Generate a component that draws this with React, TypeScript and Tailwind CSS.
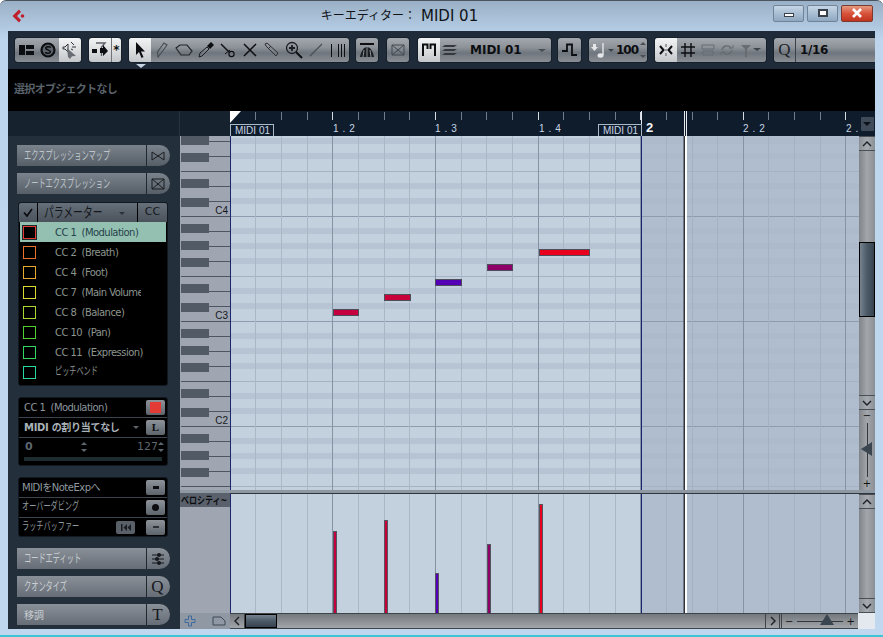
import type { ReactNode } from 'react';

const FONT = "font-['DejaVu_Sans','Noto_Sans_CJK_JP',sans-serif]";
const BASE =
  'flex h-[24px] shrink-0 overflow-hidden rounded-[3px] bg-[linear-gradient(#a3a8ae,#8d9298_40%,#6f757d_62%,#898e94)] shadow-[0_0_0_1px_#16202b]';
const GROUP = `${BASE} items-stretch`;
const CENTER = `${BASE} items-center justify-center`;
const LIT = 'bg-[linear-gradient(#f2f3f4,#dcdee0_50%,#c4c7ca)]';

const CC_ROWS = [
  { label: 'CC 1  (Modulation)', color: 'border-[#e23a34]' },
  { label: 'CC 2  (Breath)', color: 'border-[#e8702a]' },
  { label: 'CC 4  (Foot)', color: 'border-[#e8a82a]' },
  { label: 'CC 7  (Main Volume', color: 'border-[#d8d830]' },
  { label: 'CC 8  (Balance)', color: 'border-[#a8d830]' },
  { label: 'CC 10  (Pan)', color: 'border-[#50d030]' },
  { label: 'CC 11  (Expression)', color: 'border-[#30d860]' },
];

const NOTES = [
  { x: 333, y: 309, w: 26, vel: 531, fill: '#c4003e' },
  { x: 384, y: 294, w: 27, vel: 520, fill: '#c8003a' },
  { x: 435, y: 279, w: 27, vel: 573, fill: '#5400b4' },
  { x: 487, y: 264, w: 26, vel: 544, fill: '#8e0068' },
  { x: 539, y: 249, w: 51, vel: 504, fill: '#e8001c' },
];

const OCTAVES = [111, 216, 321, 426];
const TICKS = Array.from({ length: 25 }, (_, i) => ({
  x: Math.floor(230.3 + i * 25.65) + 0.5,
  beat: i % 4 === 0,
}));

function Ico({ children, w = 16, h = 16 }: { children: ReactNode; w?: number; h?: number }) {
  return (
    <svg width={w} height={h} viewBox={`0 0 ${w} ${h}`} fill="none" className="shrink-0">
      {children}
    </svg>
  );
}

function Cell({ children, lit, w = 22 }: { children: ReactNode; lit?: boolean; w?: number }) {
  return (
    <div
      style={{ width: w }}
      className={`flex shrink-0 items-center justify-center ${lit ? LIT : ''}`}
    >
      {children}
    </div>
  );
}

function Chevron({ up }: { up?: boolean }) {
  return (
    <svg width="10" height="6" viewBox="0 0 10 6" fill="none">
      <path d={up ? 'M1 5 5 1l4 4' : 'M1 1l4 4 4-4'} stroke="#1c1f24" strokeWidth="1.4" />
    </svg>
  );
}

function ScrollBtn({ up }: { up?: boolean }) {
  return (
    <div className="flex h-[15px] shrink-0 items-center justify-center border-y border-[#4a4f55] bg-[linear-gradient(90deg,#8b9097,#a6abb0,#8b9097)]">
      <Chevron up={up} />
    </div>
  );
}

// kana in the reference is set much narrower than Noto's full width glyphs
function Narrow({ children }: { children: ReactNode }) {
  return <span className="inline-block origin-left scale-x-[0.65] text-[11px] whitespace-nowrap">{children}</span>;
}

function SideButton({ label, icon, dim, wide }: { label: string; icon: ReactNode; dim?: boolean; wide?: boolean }) {
  return (
    <div
      className={`flex h-[21px] w-[153px] overflow-hidden rounded-l-[4px] rounded-r-full ${
        dim
          ? 'bg-[linear-gradient(#7a828b,#565e67)] text-[#bcc3c9]'
          : 'bg-[linear-gradient(#8a9098,#666d76)] text-[#c8cdd2]'
      }`}
    >
      <div className="flex w-[129px] shrink-0 items-center pt-[1px] pl-[7px] whitespace-nowrap">
        {wide ? (
          <span className="text-[10px]">{label}</span>
        ) : (
          <span className="inline-block origin-left scale-x-[0.6] text-[12px]">{label}</span>
        )}
      </div>
      <div className="flex w-[24px] items-center justify-center border-l border-[#20282f] pr-[2px] text-[#15181c]">
        {icon}
      </div>
    </div>
  );
}

function PanelBtn({ children }: { children?: ReactNode }) {
  return (
    <div className="flex h-[15px] w-[19px] shrink-0 items-center justify-center rounded-[2px] bg-[linear-gradient(#8d9399,#5d646c)]">
      {children}
    </div>
  );
}

function TitleBar() {
  return (
    <div className="relative flex h-[30px] shrink-0 items-center pl-[12px]">
      <svg width="14" height="14" viewBox="0 0 14 14">
        <path d="M7 0.5 0.5 7 7 13.5 9 11 5 7l4-4z" fill="#c0202c" />
        <circle cx="10.5" cy="7" r="1.8" fill="#c0202c" />
      </svg>
      <div className="flex flex-1 items-center justify-center gap-[5px] text-[#101418]">
        <span className="text-[12px] leading-[20px]">キーエディター：</span>
        <span className="text-[15px] leading-[20px]">MIDI 01</span>
      </div>
      <div className="mr-[10px] mb-[6px] flex h-[17px] gap-[3px]">
        <div className="flex w-[31px] items-center justify-center rounded-[2px] border border-[#6f8499] bg-[linear-gradient(#c6d6e6,#a9bed3_50%,#8fa8c0)]">
          <div className="mt-[3px] h-[4px] w-[10px] border border-[#39424c] bg-white" />
        </div>
        <div className="flex w-[31px] items-center justify-center rounded-[2px] border border-[#6f8499] bg-[linear-gradient(#c6d6e6,#a9bed3_50%,#8fa8c0)]">
          <div className="h-[8px] w-[10px] border-2 border-[#39424c] bg-white" />
        </div>
        <div className="flex w-[32px] items-center justify-center rounded-[2px] border border-[#7a3a30] bg-[linear-gradient(#e49a80,#d8533a_50%,#c03420)]">
          <svg width="12" height="10" viewBox="0 0 12 10">
            <path d="M2 1l8 8M10 1 2 9" stroke="#fff" strokeWidth="2.6" />
          </svg>
        </div>
      </div>
    </div>
  );
}

function Toolbar() {
  return (
    <div className={`flex h-[38px] shrink-0 items-center overflow-hidden bg-[#1f2b38] pl-[7px] ${FONT}`}>
      <div className={`${GROUP} w-[66px]`}>
        <Cell>
          <Ico w={15} h={10}>
            <path d="M0 0h6v10H0zM7 0h8v4H7zM7 6h8v4H7z" fill="#0c0e11" />
          </Ico>
        </Cell>
        <Cell>
          <Ico>
            <circle cx="8" cy="8" r="6.5" stroke="#0c0e11" strokeWidth="2.2" fill="#5c626a" />
            <path d="M10.8 5.6C9.5 4 5.6 4.6 5.8 6.4 6 8 10.4 7.8 10.4 9.8 10.3 11.4 6.5 11.8 5.2 10.2" stroke="#0c0e11" strokeWidth="1.5" />
          </Ico>
        </Cell>
        <Cell lit>
          <Ico w={16} h={18}>
            <path d="M1 6h2l3-3v8L3 8H1z M9 1 12 4M10 6h4M9 8l2 1" stroke="#30343a" />
            <path d="M5 7l9 8-4 .3L8 18l-2-2z" fill="#6a6e74" />
          </Ico>
        </Cell>
      </div>
      <div className={`${GROUP} ml-[8px] w-[32px] ${LIT}`}>
        <Cell>
          <Ico w={17} h={16}>
            <path d="M4 1h9L9.5 5v9" stroke="#5d6269" strokeWidth="1.4" />
            <path d="M0 7h5v4H0zM8 6h3V3l5 6-5 5v-3H8z" fill="#0c0e11" />
          </Ico>
        </Cell>
        <div className="flex w-[10px] items-center justify-center border-l border-[#707479] text-[12px] font-bold text-[#111]">*</div>
      </div>
      <div className="relative ml-[8px] shrink-0">
        <div className={`${GROUP} w-[220px]`}>
          <Cell lit>
            <Ico>
              <path d="M4 0v13l3-3 2.5 6 2-1-2.5-5.500H13z" fill="#0c0e11" />
            </Ico>
          </Cell>
          <Cell>
            <Ico>
              <path d="M4 15 3.500 10 10 1l3 2L6.500 12z" stroke="#4a4f56" strokeWidth="1.2" />
            </Ico>
          </Cell>
          <Cell>
            <Ico w={18} h={12}>
              <path d="M1 4 5 1h7l5 6-3 4H6z" stroke="#23272c" strokeWidth="1.2" />
            </Ico>
          </Cell>
          <Cell>
            <Ico>
              <path d="M1 15l1-4 7-6 2 2-7 7z" stroke="#1a1d21" />
              <path d="M9 4l4-4 3 3-4 4z" fill="#0c0e11" />
            </Ico>
          </Cell>
          <Cell>
            <Ico>
              <path d="M1 2l8 8" stroke="#0c0e11" strokeWidth="1.5" />
              <path d="M5 12l5-4" stroke="#0c0e11" />
              <circle cx="11.500" cy="12" r="2.600" stroke="#0c0e11" strokeWidth="1.200" />
            </Ico>
          </Cell>
          <Cell>
            <Ico w={14} h={14}>
              <path d="M1 1l12 12M13 1 1 13" stroke="#0c0e11" strokeWidth="1.5" />
            </Ico>
          </Cell>
          <Cell>
            <Ico>
              <path d="M1 2l2-1 11 10-2 3L2 4z" stroke="#2c3036" />
              <path d="M4 7l3-3" stroke="#2c3036" />
            </Ico>
          </Cell>
          <Cell>
            <Ico w={18} h={18}>
              <circle cx="7" cy="7" r="5.500" stroke="#1a1d21" strokeWidth="1.300" />
              <path d="M7 4v6M4 7h6" stroke="#1a1d21" strokeWidth="1.800" />
              <path d="M11 11l6 6" stroke="#0c0e11" strokeWidth="2" />
            </Ico>
          </Cell>
          <Cell>
            <Ico w={14} h={14}>
              <path d="M1 13 13 1" stroke="#4a4f56" strokeWidth="1.200" />
            </Ico>
          </Cell>
          <Cell>
            <Ico w={17} h={13}>
              <path d="M1.500 0v13M8.500 0v13M11.500 0v13M14.500 0v13" stroke="#0c0e11" />
            </Ico>
          </Cell>
        </div>
        <div className="absolute top-[26px] left-[7px] h-0 w-0 border-x-[5px] border-t-[4px] border-x-transparent border-t-[#c8d4e0]" />
      </div>
      <div className={`${CENTER} ml-[7px] w-[22px]`}>
        <Ico w={16} h={16}>
          <path d="M1 1h14v2H1z" fill="#0c0e11" />
          <path d="M1 15C2 9 5 5 8 5s6 4 7 10z" fill="#1a1d21" />
          <path d="M4 15l1-7M8 15V5M12 15l-1-7" stroke="#8b9096" />
        </Ico>
      </div>
      <div className={`${CENTER} ml-[9px] w-[22px]`}>
        <Ico w={14} h={14}>
          <path d="M1 2h12v10H1zM1 2l12 10M13 2 1 12" stroke="#434850" />
        </Ico>
      </div>
      <div className={`${GROUP} ml-[9px] w-[133px] text-[12px] font-bold text-[#0c0e11]`}>
        <Cell lit>
          <Ico w={14} h={14}>
            <path d="M1 13V1.500h4.500V6M13 13V1.500H8.500V6" stroke="#0c0e11" strokeWidth="2" />
          </Ico>
        </Cell>
        <Cell w={20}>
          <Ico w={16} h={12}>
            <path d="M3 1h12l-3 2H0zM3 5h12l-3 2H0zM3 9h12l-3 2H0z" fill="#34383e" />
          </Ico>
        </Cell>
        <div className="flex flex-1 items-center pl-[10px]">MIDI 01</div>
        <div className="mr-[5px] h-0 w-0 self-center border-x-[4px] border-t-[3px] border-x-transparent border-t-[#4a4f56]" />
      </div>
      <div className={`${CENTER} ml-[7px] w-[23px]`}>
        <Ico w={15} h={14}>
          <path d="M0 8h5V1.500h5V12h5" stroke="#0c0e11" strokeWidth="1.800" />
        </Ico>
      </div>
      <div className={`${BASE} ml-[8px] w-[58px] items-center text-[12px] font-bold text-[#0c0e11]`}>
        <div className="ml-[2px] shrink-0">
          <Ico w={14} h={18}>
            <path d="M2 3h3v3h2L3.500 10 0 6h2z" fill="#e4e6e8" />
            <path d="M12 2v12" stroke="#e4e6e8" strokeWidth="1.400" />
            <ellipse cx="9.500" cy="14.500" rx="3" ry="2.200" fill="#e4e6e8" />
          </Ico>
        </div>
        <div className="mr-[2px] ml-[3px] h-0 w-0 shrink-0 border-x-[3px] border-t-[3px] border-x-transparent border-t-[#3f444a]" />
        <div className="tracking-[-1px]">100</div>
        <div className="ml-[2px] flex flex-col gap-[10px]">
          <div className="h-0 w-0 border-x-[3px] border-b-[3px] border-x-transparent border-b-[#4a4f56]" />
          <div className="h-0 w-0 border-x-[3px] border-t-[3px] border-x-transparent border-t-[#4a4f56]" />
        </div>
      </div>
      <div className={`${GROUP} ml-[8px] w-[111px]`}>
        <Cell lit>
          <Ico w={14} h={14}>
            <path d="M1 3l3.500 4L1 11M13 3 9.500 7l3.500 4" stroke="#0c0e11" strokeWidth="2" />
            <path d="M7 1v3M7 6v2M7 10v3" stroke="#7a7e84" strokeWidth="1.400" />
          </Ico>
        </Cell>
        <Cell>
          <Ico w={14} h={14}>
            <path d="M4 0v14M10 0v14M0 4h14M0 10h14" stroke="#0c0e11" strokeWidth="1.400" />
          </Ico>
        </Cell>
        <Cell w={18}>
          <Ico w={14} h={12}>
            <path d="M1 1h12v4H1zM2 7h10v4H2z" stroke="#676c73" />
          </Ico>
        </Cell>
        <Cell w={20}>
          <Ico w={14} h={12}>
            <path d="M2 6a5 5 0 0 1 9-2M12 6a5 5 0 0 1-9 2" stroke="#676c73" strokeWidth="1.300" />
            <path d="M9 4h4V1M5 8H1v3" stroke="#676c73" />
          </Ico>
        </Cell>
        <Cell w={18}>
          <Ico w={12} h={13}>
            <path d="M1 1h10L7 5v8H5V5z" fill="#676c73" />
          </Ico>
        </Cell>
        <div className="mt-[10px] ml-[-2px] h-0 w-0 border-x-[4px] border-t-[3px] border-x-transparent border-t-[#3f444a]" />
      </div>
      <div className={`${GROUP} ml-[8px] w-[110px]`}>
        <div className="flex w-[22px] items-center justify-center border-r border-[#3c4249] font-['Liberation_Serif',serif] text-[17px] text-[#1f2328]">Q</div>
        <div className="flex items-center pl-[4px] text-[12px] font-bold tracking-[-0.4px] text-[#0c0e11]">1/16</div>
      </div>
    </div>
  );
}

function Ruler() {
  return (
    <div className="flex h-[25px] shrink-0 bg-[#0f1c2b]">
      <div className="w-[172px] shrink-0 border-r border-[#253240] bg-[#17222f]" />
      <svg width="679" height="25" viewBox="180 111 679 25" className="shrink-0">
        <rect x="180" y="111" width="50" height="25" fill="#17222f" />
        {TICKS.map((t) => (
          <path key={t.x} d={`M${t.x} 112v8`} stroke={t.beat ? '#d5dbe2' : '#6f7d8c'} />
        ))}
        <path d="M230 111h11l-11 12z" fill="#fff" />
        <path d="M641.500 111v25" stroke="#e8ecf0" />
        <path d="M684.500 111v25M686.500 111v25" stroke="#e8ecf0" />
        <rect x="230.500" y="124.500" width="43" height="12" fill="none" stroke="#a9bacb" />
        <rect x="598.500" y="124.500" width="43" height="12" fill="none" stroke="#a9bacb" />
        <g fontFamily="'Liberation Sans',sans-serif" fontSize="10" fill="#c8d6e4">
          <text x="235" y="134">MIDI 01</text>
          <text x="603" y="134">MIDI 01</text>
          <text x="333" y="132" letterSpacing="0.600">1 . 2</text>
          <text x="435" y="132" letterSpacing="0.600">1 . 3</text>
          <text x="539" y="132" letterSpacing="0.600">1 . 4</text>
          <text x="743" y="132" letterSpacing="0.600">2 . 2</text>
          <text x="846" y="132" letterSpacing="0.600">2 .</text>
          <text x="646" y="132" fontSize="13" fontWeight="bold" fill="#f4f6f8">2</text>
        </g>
      </svg>
      <div className="flex flex-1 items-start justify-center pt-[6px]">
        <div className="flex h-[14px] w-[13px] items-center justify-center rounded-[1px] bg-[#3f4b58]">
          <div className="h-0 w-0 border-x-[4px] border-t-[4px] border-x-transparent border-t-[#0c1118]" />
        </div>
      </div>
    </div>
  );
}

function Sidebar() {
  return (
    <div className={`flex w-[172px] shrink-0 flex-col bg-[#232f3b] pt-[9px] pl-[9px] text-[#9aa3ab] ${FONT}`}>
      <SideButton
        dim
        label="エクスプレッションマップ"
        icon={
          <Ico w={14} h={12}>
            <path d="M1 2l12 8V2L1 10z" stroke="#1a1d21" />
          </Ico>
        }
      />
      <div className="mt-[7px]">
        <SideButton
          dim
          label="ノートエクスプレッション"
          icon={
            <Ico w={14} h={12}>
              <path d="M1 1h12v10H1zM1 1l12 10M13 1 1 11" stroke="#1a1d21" />
            </Ico>
          }
        />
      </div>
      <div className="mt-[8px] ml-[1px] h-[184px] w-[150px] shrink-0 overflow-hidden rounded-[3px] border border-[#12181f] bg-black text-[10px]">
        <div className="flex h-[19px] gap-[1px] text-[#14171b]">
          <div className="flex w-[18px] items-center justify-center bg-[linear-gradient(#66707a,#4a525b)]">
            <Ico w={10} h={9}>
              <path d="M1 4.500 4 8l5-7" stroke="#0c0e11" strokeWidth="1.800" />
            </Ico>
          </div>
          <div className="flex w-[99px] items-center bg-[linear-gradient(#66707a,#4a525b)] pl-[6px] text-[14px]">
            <div className="w-[72px]">
              <span className="inline-block origin-left scale-x-[0.7] whitespace-nowrap">パラメーター</span>
            </div>
            <div className="mt-[2px] ml-[3px] h-0 w-0 border-x-[3px] border-t-[3px] border-x-transparent border-t-[#2c3138]" />
          </div>
          <div className="flex flex-1 items-center justify-center bg-[linear-gradient(#66707a,#4a525b)] text-[11px]">CC</div>
        </div>
        {CC_ROWS.map((row, i) => (
          <div
            key={row.label}
            className={`flex h-[20px] items-center pl-[4px] ${i === 0 ? 'mx-[1px] bg-[#94c0b1] text-[#25424a]' : 'text-[#8c958e]'}`}
          >
            <div className={`h-[13px] w-[13px] shrink-0 border ${row.color} ${i === 0 ? '-ml-[1px] bg-black outline outline-1 outline-[#1a2a2a]' : ''}`} />
            <div className={`ml-[18px] overflow-hidden pl-[1px] tracking-[-0.55px] whitespace-pre ${i === 3 ? 'w-[87px]' : 'w-[92px]'}`}>{row.label}</div>
          </div>
        ))}
        <div className="flex h-[20px] items-center pl-[4px] text-[#8c958e]">
          <div className="h-[13px] w-[13px] shrink-0 border border-[#28d8a0]" />
          <div className="ml-[18px] pl-[1px]">
            <Narrow>ピッチベンド</Narrow>
          </div>
        </div>
      </div>
      <div className="mt-[11px] ml-[1px] h-[69px] w-[150px] shrink-0 overflow-hidden rounded-[3px] border border-[#12181f] bg-black text-[10px]">
        <div className="flex h-[20px] items-center justify-between border-b border-[#3a444e] pr-[2px] pl-[5px] text-[#8c959c]">
          <span className="tracking-[-0.55px] whitespace-pre">CC 1  (Modulation)</span>
          <PanelBtn>
            <div className="h-[11px] w-[11px] bg-[#e23a34]" />
          </PanelBtn>
        </div>
        <div className="flex h-[20px] items-center border-b border-[#3a444e] pr-[2px] pl-[5px] font-bold text-[#aab2b9]">
          <span className="flex-1 tracking-[-0.3px]">MIDI の割り当てなし</span>
          <div className="mr-[7px] h-0 w-0 border-x-[3px] border-t-[3px] border-x-transparent border-t-[#5c646c]" />
          <PanelBtn>
            <span className="font-['Liberation_Serif',serif] text-[11px] font-bold text-[#0c0e11]">L</span>
          </PanelBtn>
        </div>
        <div className="flex h-[18px] items-center pr-[3px] pl-[6px] text-[11px] text-[#5d666e]">
          <span className="flex-1 font-bold">0</span>
          <div className="mr-[50px] flex flex-col gap-[4px]">
            <div className="h-0 w-0 border-x-[3px] border-b-[3px] border-x-transparent border-b-[#5d666e]" />
            <div className="h-0 w-0 border-x-[3px] border-t-[3px] border-x-transparent border-t-[#5d666e]" />
          </div>
          <span>127</span>
          <div className="flex flex-col gap-[4px]">
            <div className="h-0 w-0 border-x-[3px] border-b-[3px] border-x-transparent border-b-[#5d666e]" />
            <div className="h-0 w-0 border-x-[3px] border-t-[3px] border-x-transparent border-t-[#5d666e]" />
          </div>
        </div>
        <div className="mx-[5px] mt-[1px] h-[4px] bg-[#1e2c30]" />
      </div>
      <div className="mt-[11px] ml-[1px] h-[60px] w-[150px] shrink-0 overflow-hidden rounded-[3px] border border-[#12181f] bg-black text-[10px] text-[#8f989f]">
        <div className="flex h-[20px] items-center justify-between border-b border-[#3a444e] pr-[2px] pl-[3px]">
          <span className="tracking-[-0.5px]">MIDIをNoteExpへ</span>
          <PanelBtn>
            <div className="h-[3px] w-[6px] bg-[#0c0e11]" />
          </PanelBtn>
        </div>
        <div className="flex h-[20px] items-center justify-between border-b border-[#3a444e] pr-[2px] pl-[3px]">
          <div className="w-[80px]">
            <Narrow>オーバーダビング</Narrow>
          </div>
          <PanelBtn>
            <div className="h-[7px] w-[7px] rounded-full bg-[#0c0e11]" />
          </PanelBtn>
        </div>
        <div className="flex h-[18px] items-center pr-[2px] pl-[3px]">
          <div className="flex-1">
            <Narrow>ラッチバッファー</Narrow>
          </div>
          <div className="mr-[11px]">
            <div className="flex h-[13px] w-[19px] items-center justify-center rounded-[2px] bg-[#5a6068]">
              <Ico w={12} h={7}>
                <path d="M1 0h1.500v7H1zM7 0v7L3.500 3.500zM11 0v7L7.500 3.500z" fill="#1a1d21" />
              </Ico>
            </div>
          </div>
          <PanelBtn>
            <div className="h-[2px] w-[6px] bg-[#2c3036]" />
          </PanelBtn>
        </div>
      </div>
      <div className="mt-[11px]">
        <SideButton
          label="コードエディット"
          icon={
            <Ico w={14} h={14}>
              <path d="M1 3h12M1 7h12M1 11h12" stroke="#15181c" />
              <circle cx="8" cy="3" r="2" fill="#15181c" />
              <circle cx="6" cy="7" r="2" fill="#15181c" />
              <circle cx="8" cy="11" r="2" fill="#15181c" />
            </Ico>
          }
        />
      </div>
      <div className="mt-[7px]">
        <SideButton label="クオンタイズ" icon={<span className="font-['Liberation_Serif',serif] text-[17px]">Q</span>} />
      </div>
      <div className="mt-[7px]">
        <SideButton wide label="移調" icon={<span className="font-['Liberation_Serif',serif] text-[17px]">T</span>} />
      </div>
    </div>
  );
}

function Keys() {
  return (
    <svg width="50" height="354" viewBox="180 136 50 354" className="block shrink-0 bg-[#9fa6b1]">
      {OCTAVES.map((b) =>
        [8, 25, 42, 68, 87].map((o) => (
          <rect key={b + o} x="181" y={b + o} width="28" height="9" fill="#525a65" />
        )),
      )}
      {OCTAVES.map((b) =>
        [15.5, 30.5, 45.5, 75.5, 90.5].map((o) => (
          <path key={b + o} d={`M209 ${b + o}h21`} stroke="#4e5661" />
        )),
      )}
      {OCTAVES.map((b) =>
        [0.5, 60.5].map((o) => <path key={b + o} d={`M181 ${b + o}h49`} stroke="#4e5661" />),
      )}
      <g fontFamily="'Liberation Sans',sans-serif" fontSize="10" fill="#14181c" textAnchor="end">
        <text x="228" y="214">C4</text>
        <text x="228" y="319">C3</text>
        <text x="228" y="424">C2</text>
      </g>
    </svg>
  );
}

function GridLines({ y, h }: { y: number; h: number }) {
  return (
    <>
      {TICKS.map((t) => (
        <path key={t.x} d={`M${t.x} ${y}v${h}`} stroke={t.beat ? '#8593a5' : t.x > 641 ? '#a3b1c3' : '#a9b7c7'} />
      ))}
      <path d={`M230.500 ${y}v${h}M641.500 ${y}v${h}`} stroke="#1a2670" />
      <path d={`M684.500 ${y}v${h}`} stroke="#30343a" strokeWidth="2" />
      <path d={`M686 ${y}v${h}`} stroke="#ffffff" strokeWidth="2" />
    </>
  );
}

function NoteGrid() {
  return (
    <svg width="629" height="354" viewBox="230 136 629 354" className="block shrink-0">
      <rect x="230" y="136" width="411" height="354" fill="#c3d0de" />
      <rect x="641" y="136" width="218" height="354" fill="#b0bdcf" />
      {OCTAVES.map((b) =>
        [12, 27, 42, 72, 87].map((o) => (
          <g key={b + o}>
            <rect x="230" y={b + o} width="411" height="6" fill="#b7c4d4" />
            <rect x="641" y={b + o} width="218" height="6" fill="#adbacc" />
          </g>
        )),
      )}
      {OCTAVES.map((b) => (
        <g key={b}>
          <path d={`M230 ${b + 0.5}h629`} stroke="#8e9caf" />
          <path d={`M230 ${b + 60.5}h629`} stroke="#a4b2c4" />
        </g>
      ))}
      <GridLines y={136} h={354} />
      {NOTES.map((n) => (
        <rect key={n.x} x={n.x + 0.5} y={n.y + 0.5} width={n.w - 1} height="6" fill={n.fill} stroke="#4d4d5b" />
      ))}
    </svg>
  );
}

function VelocityLane() {
  return (
    <svg width="629" height="119" viewBox="230 494 629 119" className="block shrink-0">
      <rect x="230" y="494" width="411" height="119" fill="#c3d0de" />
      <rect x="641" y="494" width="218" height="119" fill="#b0bdcf" />
      <GridLines y={494} h={119} />
      {NOTES.map((n) => (
        <rect key={n.x} x={n.x + 0.5} y={n.vel + 0.5} width="3" height={613 - n.vel} fill={n.fill} stroke="#55555f" />
      ))}
    </svg>
  );
}

function VScroll() {
  return (
    <div className="flex h-[354px] w-[16px] shrink-0 flex-col">
      <ScrollBtn up />
      <div className="h-[91px] bg-[linear-gradient(90deg,#7f848a,#a3a7ac,#8a8f95)]" />
      <div className="h-[75px] shrink-0 border border-black bg-[linear-gradient(90deg,#75828f,#4c5a68,#36424e)]" />
      <div className="h-[78px] bg-[linear-gradient(90deg,#7f848a,#a3a7ac,#8a8f95)]" />
      <ScrollBtn />
      <div className="flex flex-1 flex-col items-center justify-between bg-[linear-gradient(90deg,#7f848a,#a3a7ac,#8a8f95)] py-[1px] text-[10px] leading-[10px] text-[#111]">
        <span>−</span>
        <div className="relative h-[54px] w-[1px] bg-[#33383e]">
          <div className="absolute top-[19px] left-[-6px] h-0 w-0 border-y-[7px] border-r-[11px] border-y-transparent border-r-[#3a4550]" />
        </div>
        <span>+</span>
      </div>
    </div>
  );
}

function BottomBar() {
  return (
    <div className="flex h-[16px] shrink-0">
      <div className="flex w-[50px] items-center justify-between bg-[#8f98a3] pr-[4px] pl-[4px]">
        <Ico w={12} h={12}>
          <path d="M4.500 1h3v3.500H11v3H7.500V11h-3V7.500H1v-3h3.500z" stroke="#3f6aa0" />
        </Ico>
        <Ico w={14} h={10}>
          <path d="M1 1h8l4 4v4H1z" stroke="#3f4a58" />
        </Ico>
      </div>
      <div className="flex w-[628px] border-y border-[#3f4449] bg-[linear-gradient(#74797f,#a2a6aa)]">
        <div className="flex w-[15px] items-center justify-center border-r border-[#3f4449]">
          <span className="rotate-90"><Chevron /></span>
        </div>
        <div className="w-[32px] border border-black bg-[linear-gradient(#75828f,#4c5a68,#36424e)]" />
        <div className="flex-1" />
        <div className="flex w-[15px] items-center justify-center border-x border-[#3f4449]">
          <span className="-rotate-90"><Chevron /></span>
        </div>
        <div className={`ml-[1px] flex w-[77px] items-center border-l border-[#3f4449] px-[3px] text-[10px] text-[#111] ${FONT}`}>
          <span>−</span>
          <div className="relative mx-[4px] h-[1px] flex-1 bg-[#33383e]">
            <div className="absolute top-[-7px] left-[23px] h-0 w-0 border-x-[7px] border-b-[11px] border-x-transparent border-b-[#3a4550]" />
          </div>
          <span>+</span>
        </div>
      </div>
      <div className="w-[17px] bg-[#e4e9ef]" />
    </div>
  );
}

function Editor() {
  return (
    <div className="flex w-[695px] shrink-0 flex-col">
      <div className="flex h-[354px]">
        <Keys />
        <NoteGrid />
        <VScroll />
      </div>
      <div className="h-[4px] shrink-0 border-b border-[#30353b] bg-[#8e98a3]" />
      <div className="flex h-[119px]">
        <div className={`w-[50px] shrink-0 bg-[#9fa6b1] ${FONT}`}>
          <div className="-mt-[1px] flex h-[14px] items-center bg-[#5a616c] pl-[1px] text-[#0c0e11]">
            <span className="inline-block origin-left scale-x-[0.8] text-[10px] font-bold whitespace-nowrap">ベロシティ~</span>
          </div>
        </div>
        <VelocityLane />
        <div className="flex w-[16px] shrink-0 flex-col">
          <ScrollBtn up />
          <div className="flex-1 bg-[linear-gradient(90deg,#7f848a,#a3a7ac,#8a8f95)]" />
          <ScrollBtn />
        </div>
      </div>
      <BottomBar />
    </div>
  );
}

export default function App() {
  return (
    <div className={`flex h-[637px] w-[883px] flex-col overflow-hidden rounded-t-[6px] border-t border-[#4a5560] bg-[linear-gradient(#9ab0c6,#bdd6ee_40px,#bfd8f0)] ${FONT}`}>
      <TitleBar />
      <div className="mx-[8px] flex w-[867px] flex-col">
        <Toolbar />
        <div className={`flex h-[42px] shrink-0 items-center bg-black pl-[6px] text-[11px] font-bold tracking-[-0.7px] text-[#59626a] ${FONT}`}>
          選択オブジェクトなし
        </div>
        <Ruler />
        <div className="flex h-[493px]">
          <Sidebar />
          <Editor />
        </div>
      </div>
      <div className="mt-[6px] h-[2px] bg-[#3fc4d4]" />
    </div>
  );
}
